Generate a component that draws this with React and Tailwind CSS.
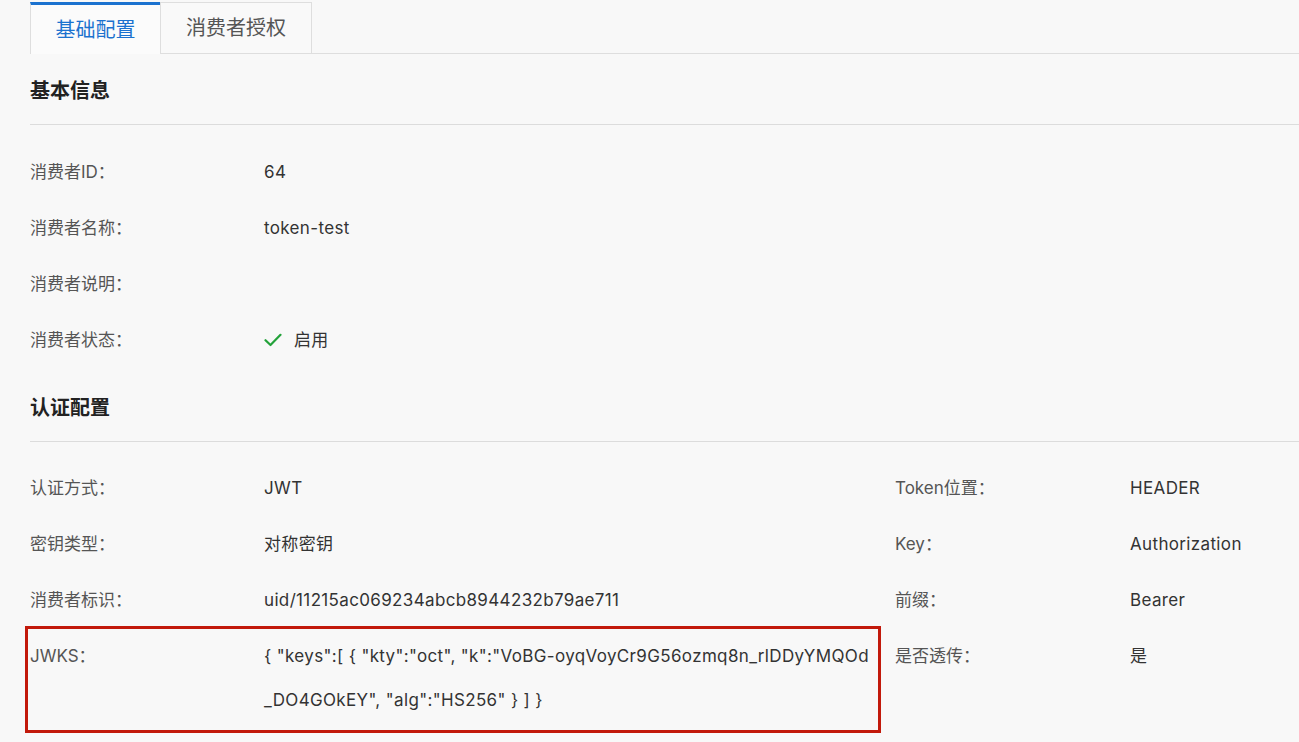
import React from 'react';

const font = { fontFamily: 'Inter, "Noto Sans CJK SC", sans-serif' };

function Row({ label, value, label2, value2 }) {
  return (
    <div className="flex py-[6px] leading-[44px] text-[17px]">
      <div className="w-[234px] shrink-0 text-[#555]">{label}</div>
      <div className="w-[631px] shrink-0 text-[#333] tracking-[0.35px]">{value}</div>
      {label2 !== undefined && (
        <>
          <div className="w-[235px] shrink-0 text-[#555]">{label2}</div>
          <div className="flex-1 text-[#333] tracking-[0.35px]">{value2}</div>
        </>
      )}
    </div>
  );
}

function Section({ title, first }) {
  return (
    <div className={`${first ? 'mt-[23px]' : 'mt-[26px]'} pb-[19px] border-b border-[#dcdcdc]`}>
      <h2 className="text-[20px] leading-[28px] font-bold text-[#222]">{title}</h2>
    </div>
  );
}

export default function App() {
  return (
    <div className="min-h-screen w-full bg-[#f8f8f8] overflow-hidden" style={font}>
      <div className="flex pt-[2px]">
        <div className="w-[30px] shrink-0" />
        <div className="w-[130px] h-[52px] border-t-[3px] border-t-[#1b72cf] border-l border-l-[#dedede] bg-[#fbfbfb] flex items-center justify-center text-[20px] text-[#1b72cf]">
          基础配置
        </div>
        <div className="w-[152px] h-[52px] border border-[#dedede] bg-[#f9f9f9] flex items-center justify-center text-[20px] text-[#555]">
          消费者授权
        </div>
        <div className="flex-1 border-b border-[#dedede]" />
      </div>

      <div className="pl-[30px]">
        <Section title="基本信息" first />
        <div className="pt-[19px]">
          <Row label="消费者ID：" value="64" />
          <Row label="消费者名称：" value="token-test" />
          <Row label="消费者说明：" value="" />
          <Row
            label="消费者状态："
            value={
              <span className="flex items-center gap-[12px]">
                <svg width="18" height="14" viewBox="0 0 18 14" fill="none">
                  <path d="M1.5 7.2 L6.5 12 L16.5 1.8" stroke="#23a23a" strokeWidth="2.2" strokeLinecap="round" strokeLinejoin="round" />
                </svg>
                <span>启用</span>
              </span>
            }
          />
        </div>

        <Section title="认证配置" />
        <div className="pt-[18px]">
          <Row label="认证方式：" value="JWT" label2="Token位置：" value2="HEADER" />
          <Row label="密钥类型：" value="对称密钥" label2="Key：" value2="Authorization" />
          <Row label="消费者标识：" value="uid/11215ac069234abcb8944232b79ae711" label2="前缀：" value2="Bearer" />
          <div className="relative">
            <div className="absolute -left-[5px] -top-[2px] w-[856px] h-[107px] border-[3px] border-[#c2190b] pointer-events-none" />
            <Row
              label="JWKS："
              value={
                <span className="block">
                  {'{ "keys":[ { "kty":"oct", "k":"VoBG-oyqVoyCr9G56ozmq8n_rlDDyYMQOd'}
                  <br />
                  {'_DO4GOkEY", "alg":"HS256" } ] }'}
                </span>
              }
              label2="是否透传："
              value2="是"
            />
          </div>
        </div>
      </div>
    </div>
  );
}
